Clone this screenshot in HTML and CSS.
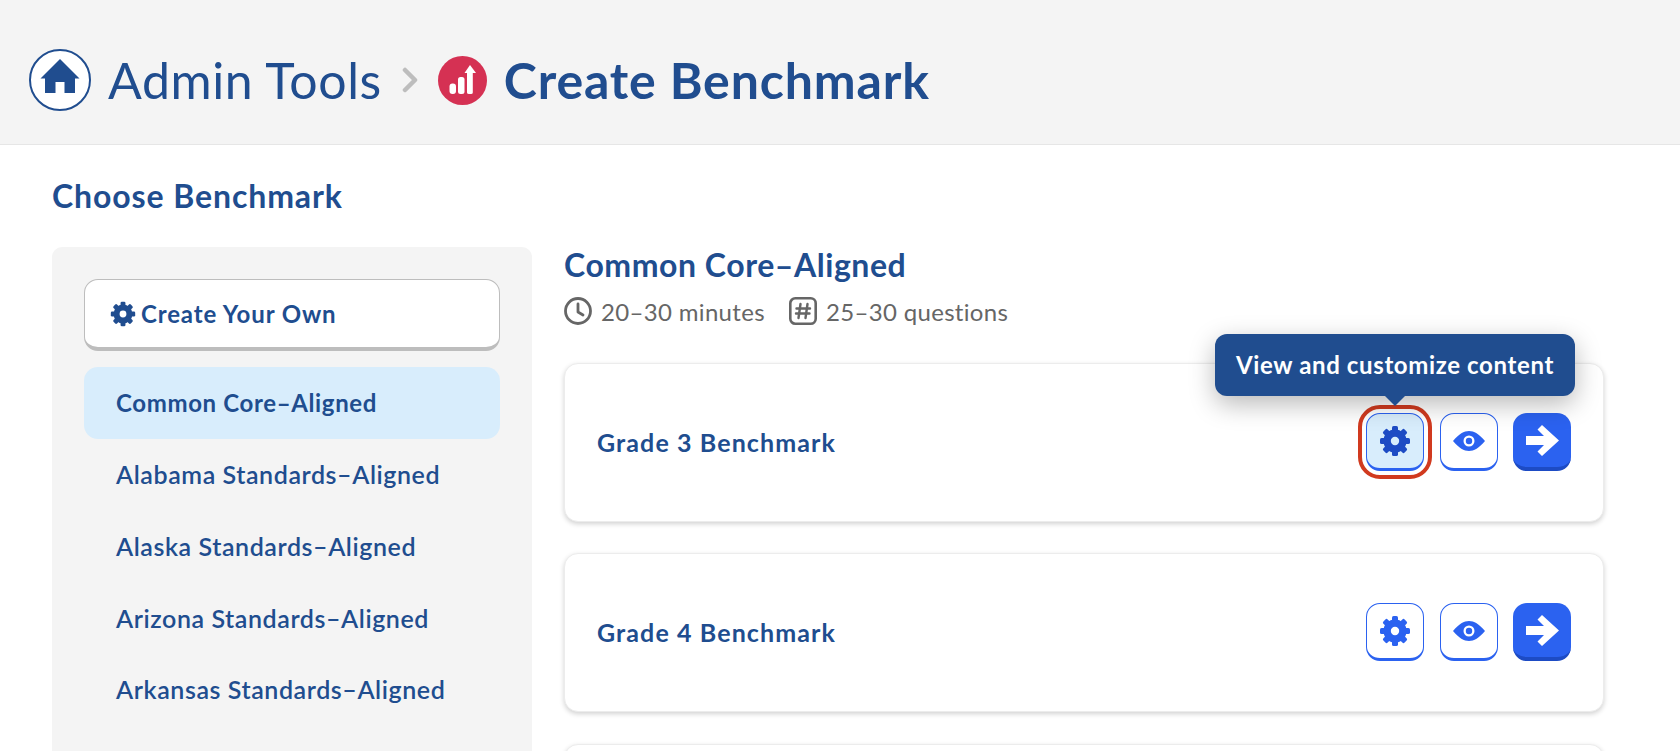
FILE: index.html
```html
<!DOCTYPE html>
<html lang="en">
<head>
    <meta charset="UTF-8">
    <meta name="viewport" content="width=device-width, initial-scale=1.0">
    <title>Create Benchmark - Admin Tools</title>
    <link rel="stylesheet" href="styles.css">
</head>
<body>
    <svg class="sprites" width="0" height="0" aria-hidden="true">
        <symbol id="icon-gear" viewBox="0 0 32 32">
            <circle cx="16" cy="16" r="7.900" fill="none" stroke="currentColor" stroke-width="7.400"/>
            <g fill="currentColor">
                <rect x="13" y="1" width="6" height="8" rx="1.600"/>
                <rect x="13" y="1" width="6" height="8" rx="1.600" transform="rotate(45 16 16)"/>
                <rect x="13" y="1" width="6" height="8" rx="1.600" transform="rotate(90 16 16)"/>
                <rect x="13" y="1" width="6" height="8" rx="1.600" transform="rotate(135 16 16)"/>
                <rect x="13" y="1" width="6" height="8" rx="1.600" transform="rotate(180 16 16)"/>
                <rect x="13" y="1" width="6" height="8" rx="1.600" transform="rotate(225 16 16)"/>
                <rect x="13" y="1" width="6" height="8" rx="1.600" transform="rotate(270 16 16)"/>
                <rect x="13" y="1" width="6" height="8" rx="1.600" transform="rotate(315 16 16)"/>
            </g>
        </symbol>
        <symbol id="icon-eye" viewBox="0 0 32 22">
            <path fill="currentColor" fill-rule="evenodd" d="M0 11C6 3.800 11 1 16 1S26 3.800 32 11C26 18.200 21 21 16 21S6 18.200 0 11ZM16 5.500A5.500 5.500 0 1 0 16 16.500A5.500 5.500 0 1 0 16 5.500ZM16 7.800A3.200 3.200 0 1 1 16 14.200A3.200 3.200 0 1 1 16 7.800Z"/>
        </symbol>
        <symbol id="icon-arrow" viewBox="0 0 33 31">
            <polygon fill="currentColor" points="0,11 18,11 11.500,4.500 16,0 33,15.500 16,31 11.500,26.500 18,20 0,20"/>
        </symbol>
    </svg>

    <header class="topbar">
        <svg class="home-icon" viewBox="0 0 62 62">
            <circle cx="31" cy="31" r="30" fill="#fff" stroke="#204d8f" stroke-width="2"/>
            <path fill="#204d8f" fill-rule="evenodd" d="M31 10L50.500 29.500H46V44H35.500V33H26.500V44H16V29.500H11.500Z"/>
        </svg>
        <span class="crumb">Admin Tools</span>
        <svg class="crumb-sep" viewBox="0 0 16 26">
            <path d="M3 3L13 13L3 23" fill="none" stroke="#bdbdbd" stroke-width="4.500" stroke-linecap="round" stroke-linejoin="round"/>
        </svg>
        <svg class="page-icon" viewBox="0 0 49 49">
            <circle cx="24.500" cy="24.500" r="24.500" fill="#d53153"/>
            <rect x="11.500" y="27.500" width="6.500" height="10.500" rx="3" fill="#fff"/>
            <rect x="20" y="21" width="6.500" height="17" rx="2.500" fill="#fff"/>
            <path fill="#fff" d="M32 9L38 17H34.800V36.500Q34.800 38 33 38H31Q29 38 29 36.500V17H26.500Z"/>
        </svg>
        <h1 class="page-title">Create Benchmark</h1>
    </header>

    <main class="content">
        <h2 class="section-title">Choose Benchmark</h2>
        <div class="columns">
            <aside class="sidebar">
                <a class="create-btn">
                    <svg class="create-gear"><use href="#icon-gear"/></svg>
                    Create Your Own
                </a>
                <ul class="standards">
                    <li class="active">Common Core–Aligned</li>
                    <li>Alabama Standards–Aligned</li>
                    <li>Alaska Standards–Aligned</li>
                    <li>Arizona Standards–Aligned</li>
                    <li>Arkansas Standards–Aligned</li>
                </ul>
            </aside>

            <section class="benchmarks">
                <h3 class="set-title">Common Core–Aligned</h3>
                <div class="set-meta">
                    <svg class="meta-icon" viewBox="0 0 28 28">
                        <circle cx="14" cy="14" r="12.500" fill="none" stroke="#666" stroke-width="2.800"/>
                        <path d="M14 7V15L19 18" fill="none" stroke="#666" stroke-width="2.800" stroke-linecap="round" stroke-linejoin="round"/>
                    </svg>
                    <span class="meta-text">20–30 minutes</span>
                    <svg class="meta-icon meta-gap" viewBox="0 0 28 28">
                        <rect x="1.300" y="1.300" width="25.400" height="25.400" rx="5" fill="none" stroke="#666" stroke-width="2.600"/>
                        <path d="M11.500 7L9.500 21M18.500 7L16.500 21M7.500 11.500H21M7 16.500H20.500" fill="none" stroke="#666" stroke-width="2.400" stroke-linecap="round"/>
                    </svg>
                    <span class="meta-text">25–30 questions</span>
                </div>

                <div class="card">
                    <span class="card-name">Grade 3 Benchmark</span>
                    <div class="card-actions">
                        <div class="tooltip">View and customize content</div>
                        <button class="icon-btn selected"><svg class="gear"><use href="#icon-gear"/></svg></button>
                        <button class="icon-btn"><svg class="eye"><use href="#icon-eye"/></svg></button>
                        <button class="icon-btn primary"><svg class="arrow"><use href="#icon-arrow"/></svg></button>
                    </div>
                </div>
                <div class="card">
                    <span class="card-name">Grade 4 Benchmark</span>
                    <div class="card-actions">
                        <button class="icon-btn"><svg class="gear"><use href="#icon-gear"/></svg></button>
                        <button class="icon-btn"><svg class="eye"><use href="#icon-eye"/></svg></button>
                        <button class="icon-btn primary"><svg class="arrow"><use href="#icon-arrow"/></svg></button>
                    </div>
                </div>
                <div class="card"></div>
            </section>
        </div>
    </main>
</body>
</html>
```

FILE: styles.css
```css
html, body {
    height: 100%;
    overflow: hidden;
}
body {
    margin: 0;
    background: #ffffff;
    color: #204d8f;
    font-family: Lato, "Noto Sans", sans-serif;
}
.sprites {
    position: absolute;
}
.topbar {
    display: flex;
    align-items: center;
    height: 128px;
    padding: 16px 0 0 29px;
    background: #f4f4f4;
    border-bottom: 1px solid #e6e6e6;
}
.home-icon {
    width: 62px;
    height: 62px;
    margin-right: 17px;
}
.crumb {
    font-size: 50px;
    font-weight: 400;
    letter-spacing: 0.6px;
}
.crumb-sep {
    width: 16px;
    height: 26px;
    margin: 0 20px 0 20px;
}
.page-icon {
    width: 49px;
    height: 49px;
    margin-right: 17px;
}
.page-title {
    margin: 0;
    font-size: 50px;
    font-weight: 700;
    letter-spacing: 0.85px;
}
.content {
    padding: 32px 0 0 52px;
}
.section-title {
    margin: 0 0 31px 0;
    font-size: 32px;
    line-height: 38px;
    font-weight: 700;
    letter-spacing: 0.9px;
}
.columns {
    display: flex;
    align-items: flex-start;
    gap: 32px;
    height: 505px;
    padding-right: 76px;
    overflow: hidden;
}
.sidebar {
    width: 480px;
    height: 100%;
    flex: none;
    margin-top: 1px;
    padding: 32px 32px 0 32px;
    box-sizing: border-box;
    background: #f4f4f4;
    border-radius: 10px 10px 0 0;
}
.create-btn {
    display: flex;
    align-items: center;
    gap: 5px;
    height: 72px;
    padding-left: 25px;
    box-sizing: border-box;
    background: #ffffff;
    border: 1px solid #bdbdbd;
    border-bottom-width: 4px;
    border-radius: 14px;
    font-size: 24px;
    font-weight: 700;
    letter-spacing: 0.87px;
}
.create-gear {
    width: 26px;
    height: 26px;
}
.standards {
    list-style: none;
    margin: 16px 0 0 0;
    padding: 0;
}
.standards li {
    height: 71.75px;
    line-height: 70px;
    padding-left: 32px;
    border-radius: 14px;
    font-size: 25px;
    font-weight: 600;
    letter-spacing: 0.58px;
}
.standards li.active {
    height: 72px;
    line-height: 72px;
    background: #d8edfc;
    font-size: 24px;
    font-weight: 700;
    letter-spacing: 0.64px;
}
.benchmarks {
    flex: 1;
    min-width: 0;
}
.set-title {
    margin: 0;
    font-size: 32px;
    line-height: 38px;
    font-weight: 700;
    letter-spacing: 0.55px;
}
.set-meta {
    display: flex;
    align-items: center;
    margin-top: 13px;
    height: 28px;
    color: #666666;
    font-size: 24px;
}
.meta-icon {
    width: 28px;
    height: 28px;
    margin-right: 9px;
}
.meta-gap {
    margin-left: 24px;
}
.meta-text {
    letter-spacing: 0.33px;
}
.card {
    display: flex;
    align-items: center;
    justify-content: space-between;
    height: 159px;
    margin-top: 31px;
    padding: 0 32px;
    box-sizing: border-box;
    background: #ffffff;
    border: 1px solid #ececec;
    border-radius: 14px;
    box-shadow: 0 2px 5px rgba(0, 0, 0, 0.18);
}
.set-meta + .card {
    margin-top: 38px;
}
.card:last-child {
    margin-top: 32px;
}
.card-name {
    margin-top: -2px;
    font-size: 25px;
    font-weight: 700;
    letter-spacing: 1.1px;
}
.card-actions {
    position: relative;
    display: flex;
    gap: 15px;
    margin-top: -1px;
}
.icon-btn {
    display: flex;
    align-items: center;
    justify-content: center;
    width: 58px;
    height: 58px;
    padding: 0;
    background: #ffffff;
    color: #2b62f0;
    border: 1px solid #2b62f0;
    border-bottom-width: 3px;
    border-radius: 14px;
}
.icon-btn:first-of-type {
    margin-right: 1px;
}
.icon-btn.selected {
    background: #d8edfc;
    color: #1d4bc4;
    outline: 4px solid #d13a1f;
    outline-offset: 4px;
}
.icon-btn.primary {
    background: #2b62f0;
    color: #ffffff;
    border-color: #1d4bc4;
    border-width: 0 0 4px 0;
}
.gear {
    width: 32px;
    height: 32px;
}
.eye {
    width: 32px;
    height: 22px;
}
.arrow {
    width: 33px;
    height: 31px;
}
.tooltip {
    position: absolute;
    z-index: 2;
    right: -4px;
    bottom: 75px;
    width: 360px;
    height: 62px;
    line-height: 62px;
    text-align: center;
    background: #204d8f;
    color: #ffffff;
    border-radius: 12px;
    font-size: 24px;
    font-weight: 700;
    letter-spacing: 0.63px;
    box-shadow: 0 8px 26px rgba(0, 0, 0, 0.28);
}
.tooltip::after {
    content: "";
    position: absolute;
    left: 170px;
    top: 62px;
    border: 10px solid transparent;
    border-top-color: #204d8f;
    border-bottom-width: 0;
}
```
